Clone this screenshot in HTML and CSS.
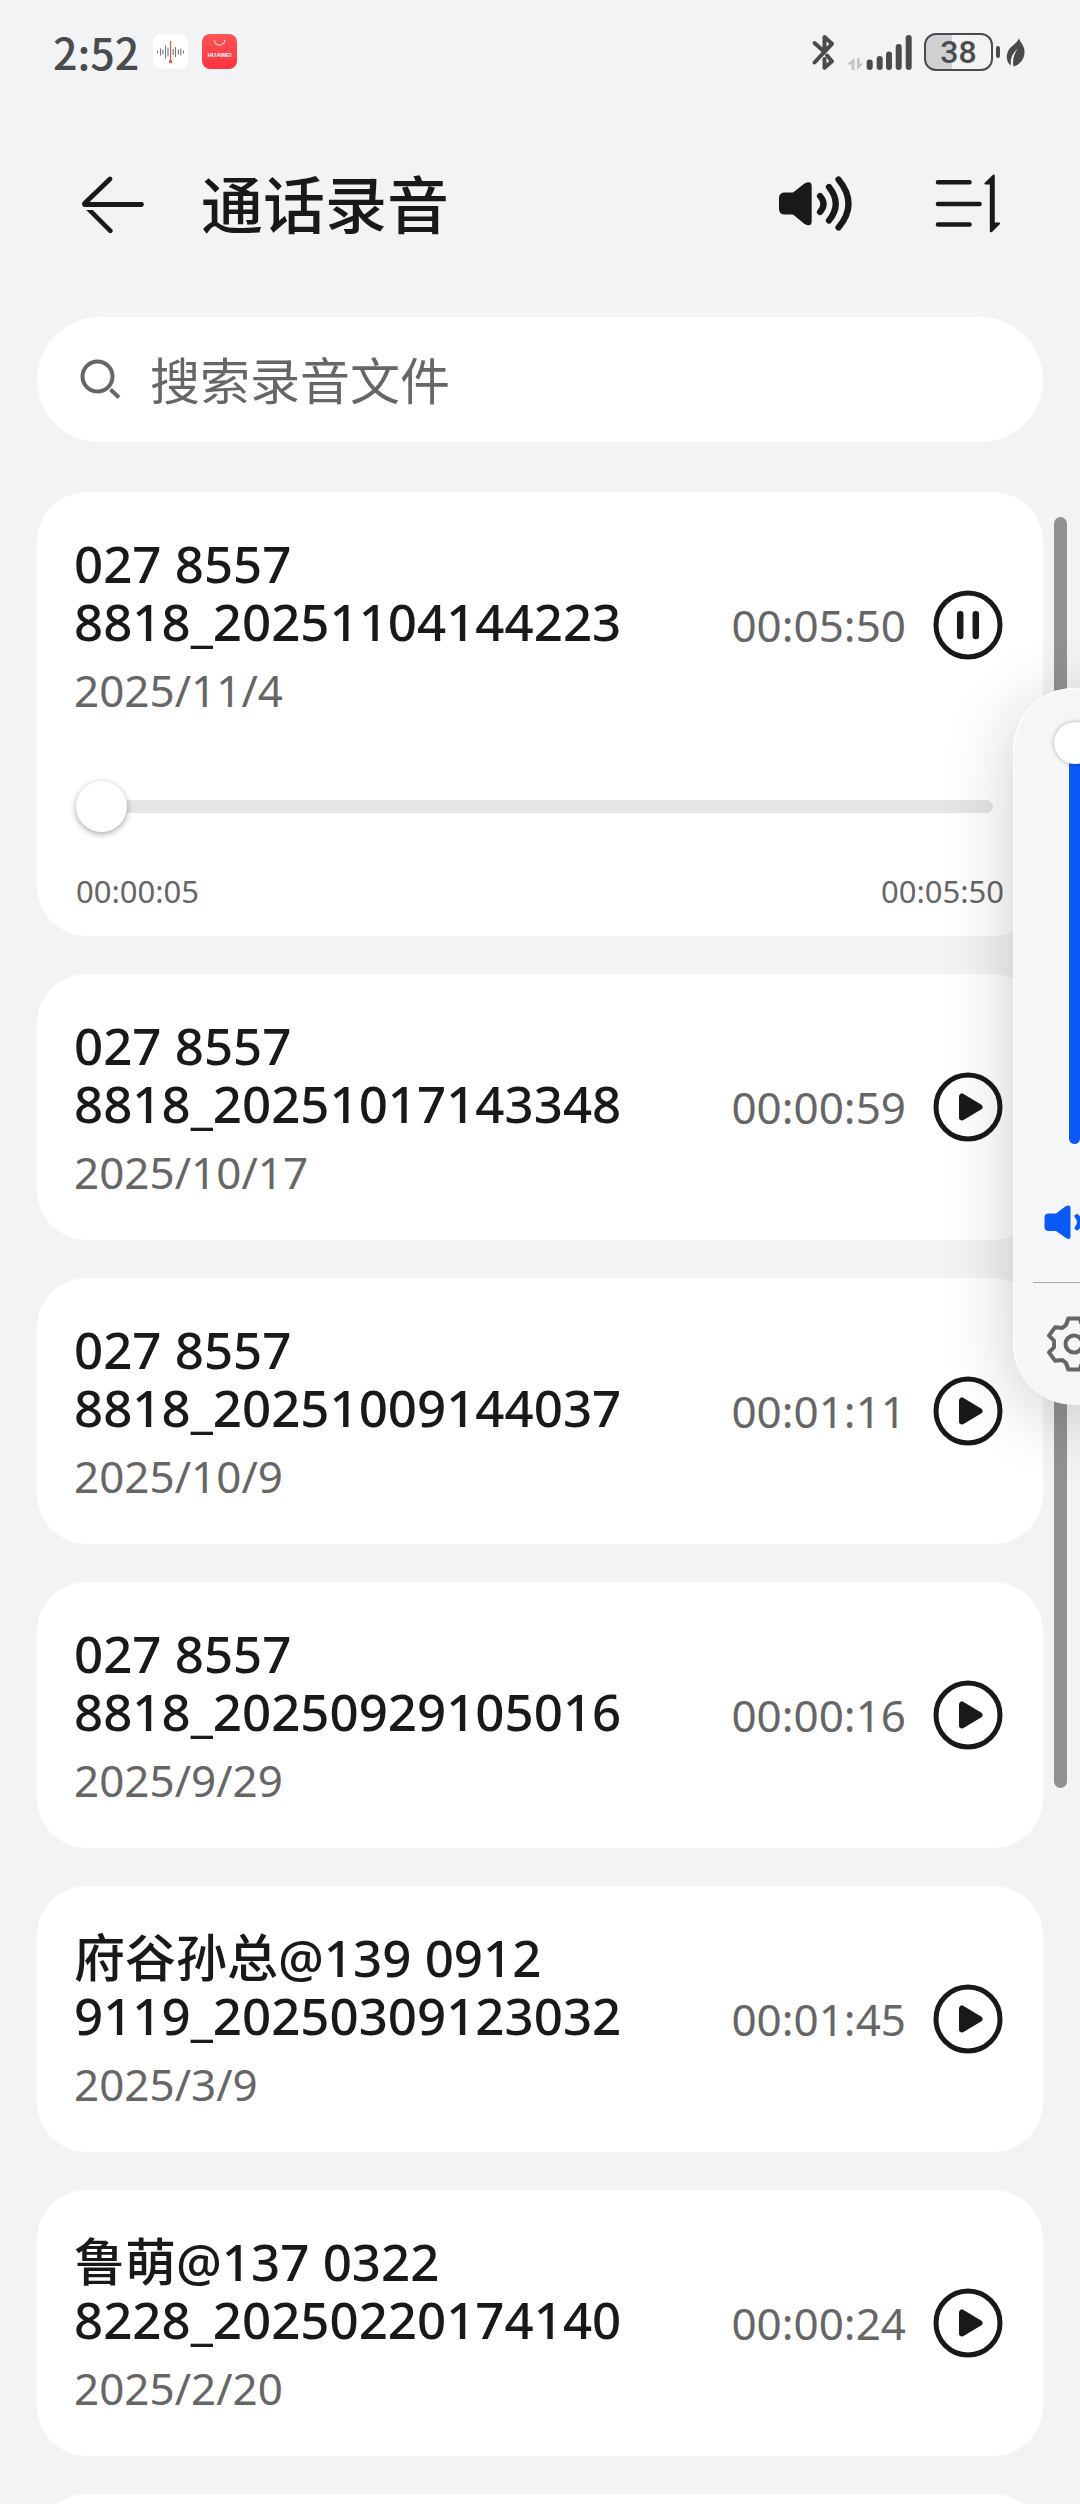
FILE: index.html
```html
<!DOCTYPE html>
<html lang="zh-CN">
<head>
    <meta charset="UTF-8">
    <meta name="viewport" content="width=device-width, initial-scale=1.0">
    <title>通话录音</title>
    <link rel="stylesheet" href="styles.css">
</head>
<body>
    <!-- Shared icons -->
    <svg class="icon-defs" aria-hidden="true">
        <symbol id="icon-play" viewBox="0 0 72 72">
            <circle cx="36" cy="36" r="32" fill="none" stroke="#191919" stroke-width="5"/>
            <path d="M30 25.5V46.500L47.500 36Z" fill="#191919" stroke="#191919" stroke-width="6" stroke-linejoin="round"/>
        </symbol>
        <symbol id="icon-pause" viewBox="0 0 72 72">
            <circle cx="36" cy="36" r="32" fill="none" stroke="#191919" stroke-width="5"/>
            <path d="M28.200 25.200V47M43.800 25.200V47" stroke="#191919" stroke-width="6.500" stroke-linecap="round"/>
        </symbol>
    </svg>

    <div class="app">
        <div class="status-bar">
            <div class="status-left">
                <span class="clock">2:52</span>
                <svg class="app-icon" viewBox="0 0 35 35">
                    <rect width="35" height="35" rx="8" fill="#fff"/>
                    <path d="M4.500 16.500v3M7.500 14.500v7M9.800 15.500v5M12.500 11.500v13M15 13.500v9M20.200 15v6M22.500 13v10M25.300 15.500v5M27.800 14.500v7M30.500 16.500v3" stroke="#777" stroke-width="1.100"/>
                    <path d="M17.600 7v20" stroke="#c96a58" stroke-width="1.200"/>
                    <rect x="16" y="26" width="3.200" height="3.200" fill="#c96a58"/>
                </svg>
                <svg class="app-icon" viewBox="0 0 35 35">
                    <defs>
                        <linearGradient id="store" x1="0" y1="0" x2="0" y2="1">
                            <stop offset="0" stop-color="#ff5555"/>
                            <stop offset="1" stop-color="#fb3340"/>
                        </linearGradient>
                    </defs>
                    <rect width="35" height="35" rx="8" fill="url(#store)"/>
                    <path d="M12.300 6a5.200 5.200 0 0 0 10.400 0" fill="none" stroke="#fff" stroke-width="1"/>
                    <text x="17.500" y="22.500" class="store-text">HUAWEI</text>
                </svg>
            </div>
            <div class="status-right">
                <svg width="28" height="38" viewBox="0 0 28 38" fill="none" stroke="#4a4b4c" stroke-width="4" stroke-linecap="round" stroke-linejoin="round">
                    <path d="M3.500 29.500L21 10.800L13.500 4V19L3.500 10"/>
                    <path d="M16 22.500L21 28.300L13.500 34.800V26"/>
                </svg>
                <svg width="70" height="38" viewBox="0 0 70 38" fill="none" stroke="#4a4b4c" stroke-width="6" stroke-linecap="round">
                    <path d="M9.500 25V37H6.500V31.500H1.500Z M12 25V37L18.500 30.500H14.500V25Z" fill="#c3c4c6" stroke="none"/>
                    <path d="M24.700 29.500V34M34.700 26V34M44 21.500V34M53.700 14V34M63.700 5V34"/>
                </svg>
                <div class="battery">
                    <span class="battery-level">38</span>
                    <span class="battery-tip"></span>
                </div>
                <svg width="20" height="34" viewBox="0 0 20 34">
                    <path d="M13 3C14 8 19 10 18.500 18C18 25 13 30 7.500 31.500C6 24 8.500 18 12 13.500C6.500 18 4 23.500 5 30.500C-1 26 0 18 4 13C8 9 11.500 7.500 13 3Z" fill="#4a4b4c"/>
                </svg>
            </div>
        </div>

        <header class="header">
            <button class="icon-button" aria-label="返回">
                <svg width="64" height="60" viewBox="0 0 64 60">
                    <path d="M3.500 30.500H60.500M3.500 29.500L29 5" fill="none" stroke="#191919" stroke-width="4.800" stroke-linecap="round"/>
                    <path d="M5.200 36H11.800L31 55.200A2.300 2.300 0 0 1 27.700 58.500Z" fill="#191919"/>
                </svg>
            </button>
            <h1 class="title">通话录音</h1>
            <div class="header-actions">
                <button class="icon-button" aria-label="扬声器">
                    <svg width="76" height="56" viewBox="0 0 76 56">
                        <path d="M7 16.500H15L26.500 7.500Q33.700 4 33.700 10.500V45Q33.700 51.500 26.500 48L15 38.500H7Q1 38.500 1 33V22Q1 16.500 7 16.500Z" fill="#191919"/>
                        <path d="M42 20Q49 28 42 36M51 11Q64.500 28 51 44.500M60.500 3.500Q80.500 28 60.500 51.500" fill="none" stroke="#191919" stroke-width="6.200" stroke-linecap="round"/>
                    </svg>
                </button>
                <button class="icon-button" aria-label="排序">
                    <svg width="68" height="60" viewBox="0 0 68 60">
                        <path d="M4 8.200H35.500M4 30H45.500M4 50.500H35.500" stroke="#191919" stroke-width="4.600" stroke-linecap="round"/>
                        <path d="M60.800 1.500V48.500H65.500Q66.800 49 65.500 50.500L58 58Q55.800 59 55.800 57V10.500H51Q49.500 10 51 8.500L59 0.800Q60.800 0 60.800 1.500Z" fill="#191919"/>
                    </svg>
                </button>
            </div>
        </header>

        <label class="search">
            <svg width="44" height="44" viewBox="0 0 44 44" fill="none" stroke="#666" stroke-width="4">
                <circle cx="19.500" cy="18.500" r="15"/>
                <path d="M32.500 31.500L41 39.500"/>
            </svg>
            <input class="search-input" type="text" placeholder="搜索录音文件" aria-label="搜索录音文件">
        </label>

        <ul class="record-list">
            <li class="card">
                <div class="record">
                    <div class="info">
                        <p class="name">027 8557 8818_20251104144223</p>
                        <p class="date">2025/11/4</p>
                    </div>
                    <span class="duration">00:05:50</span>
                    <button class="icon-button" aria-label="暂停"><svg class="play-icon"><use href="#icon-pause"/></svg></button>
                </div>
                <div class="player">
                    <input class="progress" type="range" min="0" max="350" value="0" aria-label="播放进度">
                    <div class="times">
                        <span>00:00:05</span>
                        <span>00:05:50</span>
                    </div>
                </div>
            </li>
            <li class="card">
                <div class="record">
                    <div class="info">
                        <p class="name">027 8557 8818_20251017143348</p>
                        <p class="date">2025/10/17</p>
                    </div>
                    <span class="duration">00:00:59</span>
                    <button class="icon-button" aria-label="播放"><svg class="play-icon"><use href="#icon-play"/></svg></button>
                </div>
            </li>
            <li class="card">
                <div class="record">
                    <div class="info">
                        <p class="name">027 8557 8818_20251009144037</p>
                        <p class="date">2025/10/9</p>
                    </div>
                    <span class="duration">00:01:11</span>
                    <button class="icon-button" aria-label="播放"><svg class="play-icon"><use href="#icon-play"/></svg></button>
                </div>
            </li>
            <li class="card">
                <div class="record">
                    <div class="info">
                        <p class="name">027 8557 8818_20250929105016</p>
                        <p class="date">2025/9/29</p>
                    </div>
                    <span class="duration">00:00:16</span>
                    <button class="icon-button" aria-label="播放"><svg class="play-icon"><use href="#icon-play"/></svg></button>
                </div>
            </li>
            <li class="card">
                <div class="record">
                    <div class="info">
                        <p class="name">府谷孙总@139 0912 9119_20250309123032</p>
                        <p class="date">2025/3/9</p>
                    </div>
                    <span class="duration">00:01:45</span>
                    <button class="icon-button" aria-label="播放"><svg class="play-icon"><use href="#icon-play"/></svg></button>
                </div>
            </li>
            <li class="card">
                <div class="record">
                    <div class="info">
                        <p class="name">鲁萌@137 0322 8228_20250220174140</p>
                        <p class="date">2025/2/20</p>
                    </div>
                    <span class="duration">00:00:24</span>
                    <button class="icon-button" aria-label="播放"><svg class="play-icon"><use href="#icon-play"/></svg></button>
                </div>
            </li>
            <li class="card card-empty"></li>
        </ul>

        <div class="scrollbar"></div>

        <!-- Volume panel sliding in from the right edge -->
        <aside class="volume-panel">
            <input class="volume" type="range" min="0" max="100" value="100" aria-label="音量">
            <svg class="volume-icon" width="60" height="44" viewBox="0 0 60 44">
                <path d="M5 13.500H12L22 6Q26.500 4 26.500 8.500V36Q26.500 40.500 22 38L12 31H5Q.5 31 .5 27V17.500Q.5 13.500 5 13.500Z" fill="#0a59f7"/>
                <path d="M33 16.500Q38 22 33 28M40 10Q50 22 40 34M47.500 4Q63 22 47.500 40" fill="none" stroke="#0a59f7" stroke-width="4.800" stroke-linecap="round"/>
            </svg>
            <hr class="divider">
            <button class="icon-button" aria-label="设置">
                <svg width="56" height="56" viewBox="0 0 56 56" fill="none" stroke="#666" stroke-width="4" stroke-linejoin="round">
                    <path d="M22.300 2.500H33.700L36 9L39.700 12L47 11.300L53 19.700L48 24.700V31.300L53 36.300L47 44.700L39.700 44L36 47L33.700 53.500H22.300L20 47L16.300 44L9 44.700L3 36.300L8 31.300V24.700L3 19.700L9 11.300L16.300 12L20 9Z"/>
                    <circle cx="28" cy="28" r="8.500"/>
                </svg>
            </button>
        </aside>
    </div>
</body>
</html>
```

FILE: styles.css
```css
* {
    margin: 0;
    padding: 0;
    box-sizing: border-box;
}

body {
    font-family: "Noto Sans", "Noto Sans CJK SC", sans-serif;
    background-color: #f1f3f5;
    color: #191919;
}

button {
    background: none;
    border: none;
    cursor: pointer;
}

svg {
    display: block;
}

.icon-defs {
    display: none;
}

.app {
    position: relative;
    height: 100vh;
    overflow: hidden;
}

/* Status bar */
.status-bar {
    display: flex;
    justify-content: space-between;
    align-items: center;
    height: 103px;
    padding: 0 54px 0 53px;
}

.status-left {
    display: flex;
    align-items: center;
    gap: 14px;
}

.status-right {
    display: flex;
    align-items: center;
    gap: 6px;
}

.clock {
    padding-bottom: 2px;
    font-family: "Noto Sans CJK SC", sans-serif;
    font-size: 43px;
    font-weight: 500;
    line-height: 60px;
    color: #4a4b4c;
}

.app-icon {
    width: 35px;
    height: 35px;
}

.store-text {
    font-family: "Liberation Sans", sans-serif;
    font-size: 6px;
    font-weight: 700;
    fill: #fff;
    text-anchor: middle;
}

.battery {
    display: flex;
    align-items: center;
    gap: 3px;
    padding-left: 3px;
}

.battery-level {
    width: 69px;
    border: 2px solid #4a4b4c;
    border-radius: 12px;
    background: linear-gradient(to right, #cfd0d2 40%, transparent 40%);
    font-family: Roboto, sans-serif;
    font-size: 32px;
    font-weight: 500;
    line-height: 34px;
    text-align: center;
    color: #4a4b4c;
}

.battery-tip {
    width: 4px;
    height: 12px;
    border-radius: 2px;
    background-color: #4a4b4c;
}

/* Header */
.header {
    display: flex;
    align-items: center;
    height: 201px;
    padding: 0 78px 0 81px;
}

.title {
    flex: 1;
    margin-left: 56px;
    padding-bottom: 4px;
    font-family: "Noto Sans CJK SC", sans-serif;
    font-size: 62px;
    font-weight: 500;
    line-height: 80px;
}

.header-actions {
    display: flex;
    align-items: center;
    gap: 80px;
}

/* Search */
.search {
    display: flex;
    align-items: center;
    gap: 28px;
    height: 125px;
    margin: 13px 37px 50px;
    padding: 0 41px;
    background-color: #fff;
    border-radius: 63px;
}

.search-input {
    flex: 1;
    min-width: 0;
    height: 80px;
    padding-bottom: 4px;
    border: none;
    outline: none;
    background: none;
    font-family: "Noto Sans CJK SC", sans-serif;
    font-size: 50px;
    color: #191919;
}

.search-input::placeholder {
    color: #666;
}

/* Recordings */
.record-list {
    display: flex;
    flex-direction: column;
    gap: 38px;
    margin: 0 37px;
    list-style: none;
}

.card {
    background-color: #fff;
    border-radius: 50px;
}

.card-empty {
    height: 266px;
}

.record {
    display: flex;
    align-items: center;
    gap: 26px;
    padding: 38px 39px 38px 37px;
}

.info {
    flex: 1;
    padding-top: 4px;
}

.name {
    font-size: 51px;
    font-weight: 500;
    line-height: 58px;
}

.date {
    margin-top: 10px;
    font-size: 44px;
    line-height: 60px;
    color: #666;
}

.duration {
    font-size: 44px;
    line-height: 60px;
    color: #666;
}

.play-icon {
    width: 72px;
    height: 72px;
}

.player {
    padding: 23px 39px 25px;
}

.times {
    display: flex;
    justify-content: space-between;
    margin-top: 39px;
    font-size: 31px;
    line-height: 40px;
    color: #666;
}

.progress {
    display: block;
    width: calc(100% - 11px);
    height: 51px;
    appearance: none;
    background: none;
}

.progress::-webkit-slider-runnable-track {
    height: 13px;
    border-radius: 7px;
    background-color: #e5e5e5;
}

.progress::-webkit-slider-thumb {
    appearance: none;
    width: 51px;
    height: 51px;
    margin-top: -19px;
    border-radius: 50%;
    background-color: #fff;
    box-shadow: 0 2px 6px rgba(0, 0, 0, 0.35);
}

.scrollbar {
    position: absolute;
    top: 517px;
    right: 13px;
    width: 13px;
    height: 1271px;
    border-radius: 7px;
    background-color: #909193;
}

/* Volume panel */
.volume-panel {
    position: absolute;
    top: 688px;
    right: -55px;
    display: flex;
    flex-direction: column;
    align-items: center;
    width: 122px;
    padding: 34px 0 33px;
    border-radius: 61px;
    background-color: #f5f6f7;
    box-shadow: 0 12px 70px rgba(0, 0, 0, 0.2), inset 1px 1px 2px #fff;
}

.volume {
    width: 42px;
    height: 422px;
    appearance: none;
    background: none;
    writing-mode: vertical-lr;
    direction: rtl;
}

.volume::-webkit-slider-runnable-track {
    width: 11px;
    border-radius: 6px;
    background-color: #0a59f7;
}

.volume::-webkit-slider-thumb {
    appearance: none;
    width: 42px;
    height: 42px;
    margin-left: -15px;
    border-radius: 50%;
    background-color: #fff;
    box-shadow: 0 0 4px rgba(0, 0, 0, 0.3);
}

.volume-icon {
    margin-top: 56px;
}

.divider {
    width: 82px;
    height: 1px;
    margin: 38px 0 33px;
    border: none;
    background-color: #a9abad;
}
```
